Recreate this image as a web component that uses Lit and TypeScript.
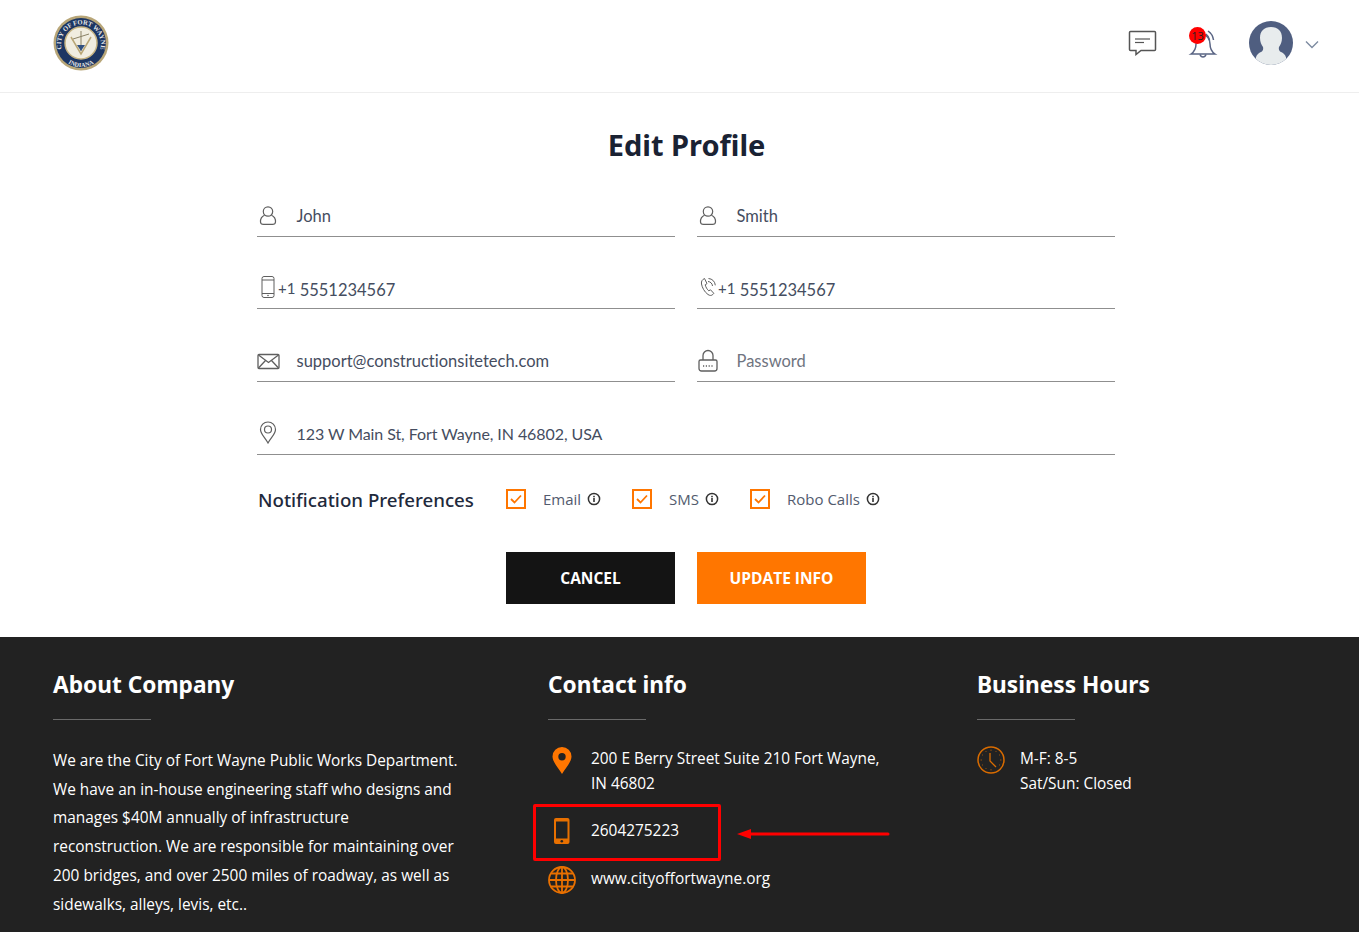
import { LitElement, html, css, svg } from "lit";
import { customElement } from "lit/decorators.js";

const stroke = (w: number, h: number, content: unknown) => html`<svg width=${w} height=${h} viewBox="0 0 ${w} ${h}" fill="none" stroke="currentColor">${content}</svg>`;

const userIcon = stroke(22, 22, svg`<circle cx="11" cy="6.500" r="4.700" stroke-width="1.200"/><path d="M7.600 10.200C4.500 11.500 3.300 14 3.500 17c.1 1.600 1.400 2.400 3 2.400h9c1.600 0 2.900-.8 3-2.400.2-3-1-5.500-4.100-6.800" stroke-width="1.200"/>`);
const mobileIcon = stroke(16, 24, svg`<rect x="2" y="1.500" width="12" height="21" rx="2" stroke-width="1"/><path d="M2 5h12M2 18.500h12" stroke-width="1"/><circle cx="8" cy="20.500" r=".8" fill="currentColor" stroke="none"/>`);
const phoneIcon = stroke(18, 22, svg`<path d="M5.500 2.500C3.500 3.500 2 5 2.500 8c.6 3.500 3 8 6.500 10.500 1.700 1.200 3.500 1.300 4.800 0l1-1.200-3.300-3.500-1.700 1c-1.500-1-3.200-4-3.600-6l1.800-1.200z" stroke-width="1"/><path d="M9 5.500c2.500.2 4.300 2 4.500 4.500M9.500 2.500c3.800.3 6.500 3 6.800 6.800" stroke-width="1"/>`);
const mailIcon = stroke(23, 17, svg`<rect x="1" y="1.500" width="21" height="14" rx="1" stroke-width="1.300"/><path d="M1.500 2l10 7.500 10-7.500M1.500 15l7-7.500M21.500 15l-7-7.500" stroke-width="1.300"/>`);
const lockIcon = stroke(22, 24, svg`<path d="M6 11V6.500a5 5 0 0 1 10 0V11" stroke-width="1.300"/><path d="M3.500 11h15c.8 0 1.500.7 1.500 1.500v7c0 1.500-1 2.500-2.500 2.500h-13C3 22 2 21 2 19.500v-7c0-.8.700-1.500 1.500-1.500z" stroke-width="1.300"/><path d="M6 17h10" stroke-width="1.300" stroke-dasharray="1.200 1.600"/>`);
const pinIcon = stroke(18, 23, svg`<path d="M9 22C6 16.500 1.500 13 1.500 8.500a7.500 7.500 0 0 1 15 0C16.500 13 12 16.500 9 22z" stroke-width="1.200"/><circle cx="9" cy="8.500" r="3.500" stroke-width="1.200"/>`);
const infoIcon = html`<svg class="info" width="14" height="14" viewBox="0 0 14 14"><circle cx="7" cy="7" r="5.600" fill="none" stroke="currentColor" stroke-width="1.500"/><rect x="6.200" y="6" width="1.600" height="4" fill="currentColor"/><rect x="6.200" y="3.800" width="1.600" height="1.500" fill="currentColor"/></svg>`;

@customElement("app-root")
export class AppRoot extends LitElement {
  static styles = css`
    :host { display: block; font-family: "Lato", sans-serif; color: #35405a; background: #fff; height: 932px; overflow: hidden; }
    header { height: 93px; box-sizing: border-box; border-bottom: 1px solid #eeeeee; display: flex; align-items: center; padding: 0 40px 6px 53px; }
    .logo { display: block; }
    .head-right { margin-left: auto; display: flex; align-items: center; }
    .chat { display: block; }
    .bell-wrap { position: relative; width: 30px; height: 30px; margin-left: 31px; }
    .bell { display: block; }
    .badge { position: absolute; left: 1px; top: -1px; width: 17px; height: 17px; border-radius: 50%; background: #ff0000; color: #222; font: 11px/17px "Open Sans", sans-serif; text-align: center; }
    .avatar { display: block; margin-left: 31px; }
    .caret { display: block; margin-left: 12px; margin-top: 2px; }
    main { height: 544px; box-sizing: border-box; padding: 32px 0 0 14px; }
    h1 { margin: 0; text-align: center; font: 700 29px/40px "Noto Sans", sans-serif; color: #1a2233; }
    form { width: 858px; margin: 33.800px 0 0 243px; display: grid; grid-template-columns: 418px 418px; column-gap: 22px; }
    .field { height: 35px; padding-bottom: 2px; border-bottom: 1px solid #8f8f8f; display: flex; align-items: center; color: #5f5f5f; margin-bottom: 34.600px; }
    .field.wide { grid-column: 1 / 3; }
    .ico { width: 39.500px; flex: none; display: flex; }
    .ico.sm { width: 21px; }
    .shift { margin-left: 3px; }
    .shift1 { margin-left: 2px; }
    .val { font-size: 16.500px; color: #454d60; line-height: 20px; font-variant-ligatures: none; }
    .val.addr { font-size: 16px; letter-spacing: -.08px; }
    .val.big { font-size: 16.500px; position: relative; top: 1px; }
    .ph { color: #6f7480; }
    .sup { font-size: 15px; position: relative; top: -2px; }
    .prefs { grid-column: 1 / 3; display: flex; align-items: center; height: 44px; margin-top: -12px; }
    .prefs h2 { margin: 0; font: 500 18.700px/24px "Noto Sans", sans-serif; color: #1f2a3c; width: 249px; padding: 2px 0 0 1px; box-sizing: border-box; }
    .check { display: flex; align-items: center; font: 15px/20px "Open Sans", sans-serif; color: #525b6e; }
    .box { width: 20px; height: 20px; box-sizing: border-box; border: 2px solid #ff7600; flex: none; margin-right: 17px; display: flex; align-items: center; justify-content: center; }
    .info { color: #333; margin-left: 6px; }
    .c1 { width: 126px; } .c2 { width: 118px; }
    .btns { grid-column: 1 / 3; display: flex; justify-content: center; gap: 22px; margin-top: 31px; }
    button { width: 169px; height: 52px; border: 0; color: #fff; font: 700 15.500px "Open Sans", sans-serif; padding: 0; }
    .dark { background: #141414; } .orange { background: #ff7600; }
    footer { position: relative; height: 295px; background: #222222; color: #fff; display: grid; grid-template-columns: 495px 429px 1fr; padding-left: 53px; font-family: "Open Sans", sans-serif; }
    footer h3 { margin: 31px 0 0; font: 700 22.700px/34px "Noto Sans", sans-serif; color: #fff; }
    .rule { width: 98px; height: 1px; background: #6a6a6a; margin: 17px 0 0; }
    .about { margin: 27px 0 0; font-size: 15.400px; line-height: 28.700px; width: 408px; }
    .row { display: flex; font-size: 15.400px; line-height: 25px; }
    .row .i { width: 43px; flex: none; display: flex; justify-content: flex-start; }
    .rows { margin-top: 26px; width: 345px; }
    .r2 { margin-top: 22px; } .r3 { margin-top: 22px; }
    .note-box { position: absolute; left: 533px; top: 167px; width: 188px; height: 57px; box-sizing: border-box; border: 3px solid #ff0000; border-radius: 2px; }
    .arrow { position: absolute; left: 736px; top: 190px; display: block; }
  `;

  render() {
    return html`
      <header>
        <svg class="logo" width="56" height="56" viewBox="0 0 56 56">
          <defs>
            <path id="top" d="M9.500 37A20 20 0 1 1 46.500 37"/>
            <path id="bot" d="M8 41A23.500 23.500 0 0 0 48 41"/>
          </defs>
          <circle cx="28" cy="28" r="27.500" fill="#b8a678"/>
          <circle cx="28" cy="28" r="25" fill="#1d3663"/>
          <circle cx="28" cy="28" r="16" fill="#f1ede0" stroke="#c7b483" stroke-width="1.500"/>
          <text font-family="Liberation Serif, serif" font-size="6.600" font-weight="700" fill="#e8e8e8" text-anchor="middle"><textPath href="#top" startOffset="50%">CITY OF FORT WAYNE</textPath></text>
          <text font-family="Liberation Serif, serif" font-size="6.200" font-weight="700" fill="#e8e8e8" text-anchor="middle"><textPath href="#bot" startOffset="50%">INDIANA</textPath></text>
          <path d="M18 22l10 17 10-17" fill="none" stroke="#b9a676" stroke-width="1.500"/>
          <path d="M28 16v20M20 24l16-5" stroke="#8b8266" stroke-width="1"/>
          <path d="M24 30l4 6 4-6z" fill="#31507f"/>
        </svg>
        <div class="head-right">
          <svg class="chat" width="29" height="26" viewBox="0 0 29 26" fill="none"><path d="M2.500 1.500h24c.6 0 1 .4 1 1v17c0 .6-.4 1-1 1H13l-5 4v-4H2.500c-.6 0-1-.4-1-1v-17c0-.6.400-1 1-1z" stroke="#555" stroke-width="1.500"/><path d="M7 9h15" stroke="#555" stroke-width="1.200"/><path d="M7 12.500h9" stroke="#555" stroke-width="1.200"/></svg>
          <div class="bell-wrap">
            <svg class="bell" width="30" height="30" viewBox="0 0 30 30" fill="none" stroke="#5a6584" stroke-width="1.500"><path d="M3 26c3-2 5-5 5-10 0-5 3-9 7-10 4 1 7 5 7 10 0 5 2 8 5 10z"/><path d="M12 26.500c.5 1.500 1.500 2.500 3 2.500s2.500-1 3-2.500"/><path d="M20 3c3 2 5 5 5.500 9M18 6c2 1.500 3 3.500 3.500 6"/></svg>
            <span class="badge">13</span>
          </div>
          <svg class="avatar" width="44" height="44" viewBox="0 0 44 44"><defs><clipPath id="av"><circle cx="22" cy="22" r="22"/></clipPath></defs><circle cx="22" cy="22" r="22" fill="#4f5e80"/><g clip-path="url(#av)"><path d="M22 6c-7 0-11 4-11 11 0 4 1.500 7 3 9 .5 2 0 4-2 5-3 1.500-6 3-6 13h32c0-10-3-11.500-6-13-2-1-2.500-3-2-5 1.500-2 3-5 3-9 0-7-4-11-11-11z" fill="#e8eced"/></g></svg>
          <svg class="caret" width="14" height="9" viewBox="0 0 14 9" fill="none"><path d="M1 1.500l6 6 6-6" stroke="#7d8ba1" stroke-width="1.400"/></svg>
        </div>
      </header>
      <main>
        <h1>Edit Profile</h1>
        <form>
          <div class="field"><span class="ico">${userIcon}</span><span class="val">John</span></div>
          <div class="field"><span class="ico">${userIcon}</span><span class="val">Smith</span></div>
          <div class="field"><span class="ico sm"><span class="shift">${mobileIcon}</span></span><span class="val big"><span class="sup">+1</span> 5551234567</span></div>
          <div class="field"><span class="ico sm"><span class="shift1">${phoneIcon}</span></span><span class="val big"><span class="sup">+1</span> 5551234567</span></div>
          <div class="field"><span class="ico">${mailIcon}</span><span class="val">support@constructionsitetech.com</span></div>
          <div class="field"><span class="ico">${lockIcon}</span><span class="val ph">Password</span></div>
          <div class="field wide"><span class="ico"><span class="shift1">${pinIcon}</span></span><span class="val addr">123 W Main St, Fort Wayne, IN 46802, USA</span></div>
          <div class="prefs">
            <h2>Notification Preferences</h2>
            ${[["Email", "c1"], ["SMS", "c2"], ["Robo Calls", ""]].map(([t, c]) => html`
              <div class="check ${c}"><span class="box"><svg width="12" height="10" viewBox="0 0 12 10" fill="none"><path d="M1 5l3.500 3.500L11 1.500" stroke="#ff7600" stroke-width="1.800"/></svg></span>${t}${infoIcon}</div>`)}
          </div>
          <div class="btns"><button type="button" class="dark">CANCEL</button><button type="button" class="orange">UPDATE INFO</button></div>
        </form>
      </main>
      <footer>
        <section>
          <h3>About Company</h3><div class="rule"></div>
          <p class="about">We are the City of Fort Wayne Public Works Department. We have an in-house engineering staff who designs and manages $40M annually of infrastructure reconstruction. We are responsible for maintaining over 200 bridges, and over 2500 miles of roadway, as well as sidewalks, alleys, levis, etc..</p>
        </section>
        <section>
          <h3>Contact info</h3><div class="rule"></div>
          <div class="rows">
            <div class="row"><span class="i"><svg width="28" height="28" viewBox="0 0 28 28"><path fill-rule="evenodd" d="M14 1a9.500 9.500 0 0 0-9.500 9.500C4.500 16 10.500 22 14 28c3.500-6 9.500-12 9.500-17.500A9.500 9.500 0 0 0 14 1zm0 6a3.700 3.700 0 1 1 0 7.400A3.700 3.700 0 0 1 14 7z" fill="#ff7600"/></svg></span><span>200 E Berry Street Suite 210 Fort Wayne,<br />IN 46802</span></div>
            <div class="row r2"><span class="i"><svg width="28" height="26" viewBox="0 0 28 26"><rect x="6" y="0" width="15.500" height="26" rx="2" fill="#e87000"/><rect x="8" y="3.500" width="11.500" height="17" fill="#222"/><circle cx="13.800" cy="23.200" r="1.300" fill="#222"/></svg></span><span>2604275223</span></div>
            <div class="row r3"><span class="i"><svg width="28" height="28" viewBox="0 0 28 28" fill="none" stroke="#e87000" stroke-width="1.800"><circle cx="14" cy="14" r="13"/><ellipse cx="14" cy="14" rx="6" ry="13"/><path d="M14 1v26M1 14h26M3 7.500h22M3 20.500h22"/></svg></span><span>www.cityoffortwayne.org</span></div>
          </div>
        </section>
        <section>
          <h3>Business Hours</h3><div class="rule"></div>
          <div class="rows"><div class="row"><span class="i"><svg width="28" height="28" viewBox="0 0 28 28" fill="none" stroke="#d96c00"><circle cx="14" cy="14" r="13" stroke-width="1.500"/><path d="M13 7v8l6 6" stroke-width="1.300"/><path d="M14 3.500v1.500M14 23v1.500M3.500 14H5M23 14h1.500M8.700 5l.6 1M19.300 5l-.6 1M8.700 23l.6-1M5 8.700l1 .6M23 8.700l-1 .6M5 19.300l1-.6M23 19.300l-1-.6" stroke-width="1" opacity=".6"/></svg></span><span>M-F: 8-5<br />Sat/Sun: Closed</span></div></div>
        </section>
        <div class="note-box"></div>
        <svg class="arrow" width="154" height="14" viewBox="0 0 154 14"><path d="M1 7l14-5v3.500h137a1.500 1.500 0 0 1 0 3H15V12z" fill="#ff0000"/></svg>
      </footer>
    `;
  }
}
